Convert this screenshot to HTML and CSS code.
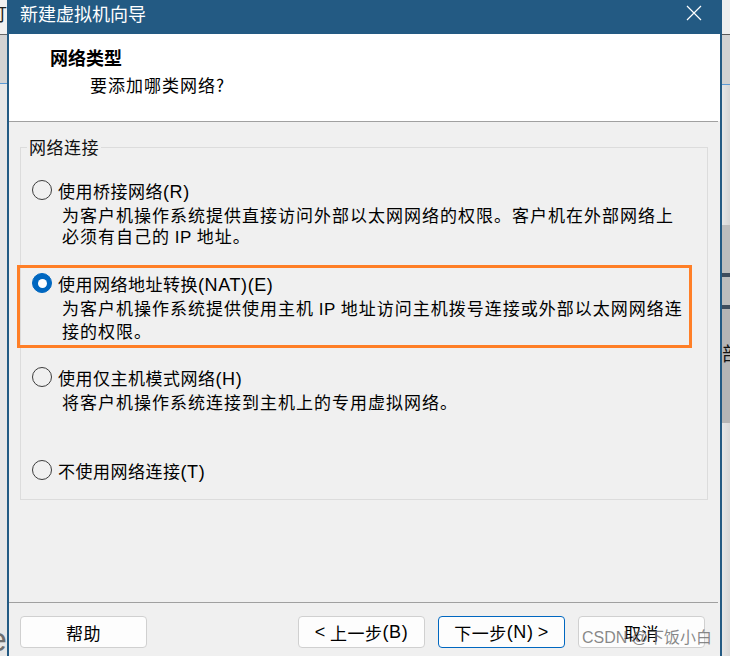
FILE: index.html
```html
<!DOCTYPE html>
<html lang="zh-CN">
<head>
<meta charset="utf-8">
<title>新建虚拟机向导</title>
<link rel="stylesheet" href="styles.css">
</head>
<body>
<div class="desktop">
  <div class="strip strip-left">
    <div class="seg l-top"><span class="frag frag-l">订</span></div>
    <div class="seg l-line"></div>
    <div class="seg l-tab"></div>
    <div class="seg l-blue"></div>
    <div class="seg l-rest"><span class="frag frag-e">e</span></div>
  </div>

  <div class="dialog">
    <div class="titlebar">
      <span class="title">新建虚拟机向导</span>
      <svg class="close" width="16" height="16" viewBox="0 0 16 16" aria-hidden="true"><path d="M1 1L15 15M15 1L1 15" stroke="#ffffff" stroke-width="1.2" fill="none"/></svg>
    </div>
    <div class="header">
      <div class="h-title">网络类型</div>
      <div class="h-sub">要添加哪类网络?</div>
    </div>
    <div class="sep"></div>
    <div class="content">
      <fieldset class="group">
        <legend>网络连接</legend>
        <div class="opt r1">
          <div class="opt-head"><span class="radio"></span><span>使用桥接网络<span class="lat">(R)</span></span></div>
          <div class="desc">为客户机操作系统提供直接访问外部以太网网络的权限。客户机在外部网络上<br>必须有自己的 <span class="lat-d">IP</span> 地址。</div>
        </div>
        <div class="opt r2">
          <div class="opt-head"><span class="radio checked"></span><span>使用网络地址转换<span class="lat">(NAT)(E)</span></span></div>
          <div class="desc">为客户机操作系统提供使用主机 <span class="lat-d">IP</span> 地址访问主机拨号连接或外部以太网网络连<br>接的权限。</div>
          <div class="hl"></div>
        </div>
        <div class="opt r3">
          <div class="opt-head"><span class="radio"></span><span>使用仅主机模式网络<span class="lat">(H)</span></span></div>
          <div class="desc">将客户机操作系统连接到主机上的专用虚拟网络。</div>
        </div>
        <div class="opt r4">
          <div class="opt-head"><span class="radio"></span><span>不使用网络连接<span class="lat">(T)</span></span></div>
        </div>
      </fieldset>
    </div>
    <div class="sep"></div>
    <div class="footer">
      <div class="btn">帮助</div>
      <div class="spacer"></div>
      <div class="btn-group">
        <div class="btn"><span class="lat-b">&lt;</span>&nbsp;上一步<span class="lat">(B)</span></div>
        <div class="btn primary">下一步<span class="lat">(N)</span>&nbsp;<span class="lat-b">&gt;</span></div>
        <div class="btn">取消</div>
      </div>
    </div>
  </div>

  <div class="strip strip-right">
    <div class="seg r-top"></div>
    <div class="seg r-line"></div>
    <div class="seg r-tab"></div>
    <div class="seg r-blue"></div>
    <div class="seg r-light"></div>
    <div class="seg r-g1"></div>
    <div class="seg r-dark"></div>
    <div class="seg r-g2"></div>
    <div class="seg r-dark"></div>
    <div class="seg r-g3"><span class="frag frag-r">部</span></div>
    <div class="seg r-rest"></div>
  </div>

  <div class="watermark">CSDN @下饭小白</div>
</div>
</body>
</html>
```

FILE: styles.css
```css
* { box-sizing: border-box; }
html, body { margin: 0; padding: 0; }
body {
  width: 730px;
  height: 656px;
  overflow: hidden;
  background: #e6e6e6;
  font-family: "Noto Sans CJK SC", "Liberation Sans", sans-serif;
  color: #000;
}
.desktop {
  position: relative;
  display: flex;
  width: 730px;
  height: 656px;
  overflow: hidden;
}

/* background strips of the app behind the dialog */
.strip { flex: none; display: flex; flex-direction: column; overflow: hidden; }
.strip-left { width: 7px; }
.strip-right { width: 8px; }
.seg { flex: none; overflow: hidden; white-space: nowrap; }
.l-top { height: 34px; background: #f1f1f1; }
.l-line { height: 1px; background: #666; }
.l-tab { height: 48px; background: #d3d3d3; }
.l-blue { height: 1px; background: #5a9ad6; }
.l-rest { flex: 1; background: #e7e7e7; padding-top: 538px; }
.frag { display: block; line-height: 20px; }
.frag-l { font-size: 18px; margin-left: -11px; margin-top: 3px; color: #222; }
.frag-e { font-family: "Liberation Sans", sans-serif; font-size: 34px; line-height: 34px; color: #6e6e6e; margin-left: -12px; }

.r-top { height: 34px; background: #efefef; }
.r-line { height: 1px; background: #5a5a5a; }
.r-tab { height: 49px; background: #d2d2d2; }
.r-blue { height: 1px; background: #5c9bd6; }
.r-light { height: 140px; background: linear-gradient(to right, #e6e6e6, #d6d6d6); }
.r-g1 { height: 48px; background: #bdbdbd; }
.r-dark { height: 4px; background: #3f4d5d; }
.r-g2 { height: 28px; background: #bdbdbd; }
.r-g3 { height: 114px; background: #b5b5b5; padding-top: 34px; }
.frag-r { font-size: 19px; color: #111; margin-left: 0; }
.r-rest { flex: 1; background: linear-gradient(to right, #e6e6e6, #d8d8d8); }

/* dialog */
.dialog {
  flex: none;
  width: 715px;
  display: flex;
  flex-direction: column;
  background: #f0f0f0;
  border-left: 2px solid #235a83;
  border-right: 2px solid #235a83;
}
.titlebar {
  flex: none;
  height: 34px;
  background: #235a83;
  color: #fff;
  display: flex;
  justify-content: space-between;
  align-items: flex-start;
  padding: 1px 18px 0 11px;
}
.title { font-size: 18px; line-height: 24px; }
.close { margin-top: 4px; display: block; }

.header {
  flex: none;
  height: 87px;
  background: #fff;
  padding: 11px 0 0 41px;
}
.h-title { font-size: 18px; font-weight: 700; line-height: 24px; }
.h-sub { font-size: 17px; letter-spacing: 1px; line-height: 24px; margin-top: 4px; padding-left: 40px; }

.sep { flex: none; height: 1px; background: #a0a0a0; margin-right: 2px; }

.content {
  flex: none;
  height: 480px;
  padding: 15px 12px 0 11px;
}
.group {
  margin: 0;
  padding: 20px 0 0 0;
  border: 1px solid #dcdcdc;
  min-width: 0;
}
.group legend {
  margin-left: 6px;
  padding: 0 2px;
  font-size: 17px;
  line-height: 20px;
  letter-spacing: 0.5px;
  color: #111;
}
.opt { position: relative; white-space: nowrap; }
.r1 { height: 93px; }
.r2 { height: 94px; }
.r3 { height: 93px; }
.r4 { height: 42px; }
.opt-head {
  display: flex;
  align-items: center;
  gap: 6px;
  height: 26px;
  padding-left: 11px;
  font-size: 17px;
  letter-spacing: 0.5px;
}
.lat { font-family: "Liberation Sans", sans-serif; font-size: 18px; letter-spacing: 0.6px; }
.lat-d { font-family: "Liberation Sans", sans-serif; font-size: 17px; letter-spacing: 0.5px; }
.lat-b { font-family: "Liberation Sans", sans-serif; font-size: 18px; }
.radio {
  flex: none;
  width: 20px;
  height: 20px;
  border: 1px solid #3c3c3c;
  border-radius: 50%;
  display: flex;
  align-items: center;
  justify-content: center;
}
.radio.checked { background: #0067c0; border-color: #0067c0; }
.radio.checked::after {
  content: "";
  width: 9px;
  height: 9px;
  border-radius: 50%;
  background: #fff;
}
.desc {
  padding-left: 41px;
  margin-top: 2px;
  font-size: 17px;
  letter-spacing: 1px;
  line-height: 20.5px;
}
.hl {
  position: absolute;
  left: -4px;
  top: -5px;
  width: 675px;
  height: 83px;
  border: 3px solid #ff7f27;
  pointer-events: none;
}

.footer {
  flex: 1;
  display: flex;
  align-items: flex-start;
  padding: 13px 15px 0 11px;
}
.spacer { flex: 1; }
.btn-group { display: flex; gap: 13px; }
.btn {
  width: 127px;
  height: 32px;
  border: 1px solid #d0d0d0;
  border-radius: 4px;
  background: #fdfdfd;
  display: flex;
  align-items: center;
  justify-content: center;
  font-size: 17px;
  letter-spacing: 0.5px;
  white-space: nowrap;
}
.btn.primary { border-color: #0067c0; }

.watermark {
  position: absolute;
  left: 582px;
  top: 628px;
  font-family: "Liberation Sans", "Noto Sans CJK SC", sans-serif;
  font-size: 16px;
  line-height: 20px;
  color: rgba(115, 115, 115, 0.85);
  white-space: nowrap;
}
```
